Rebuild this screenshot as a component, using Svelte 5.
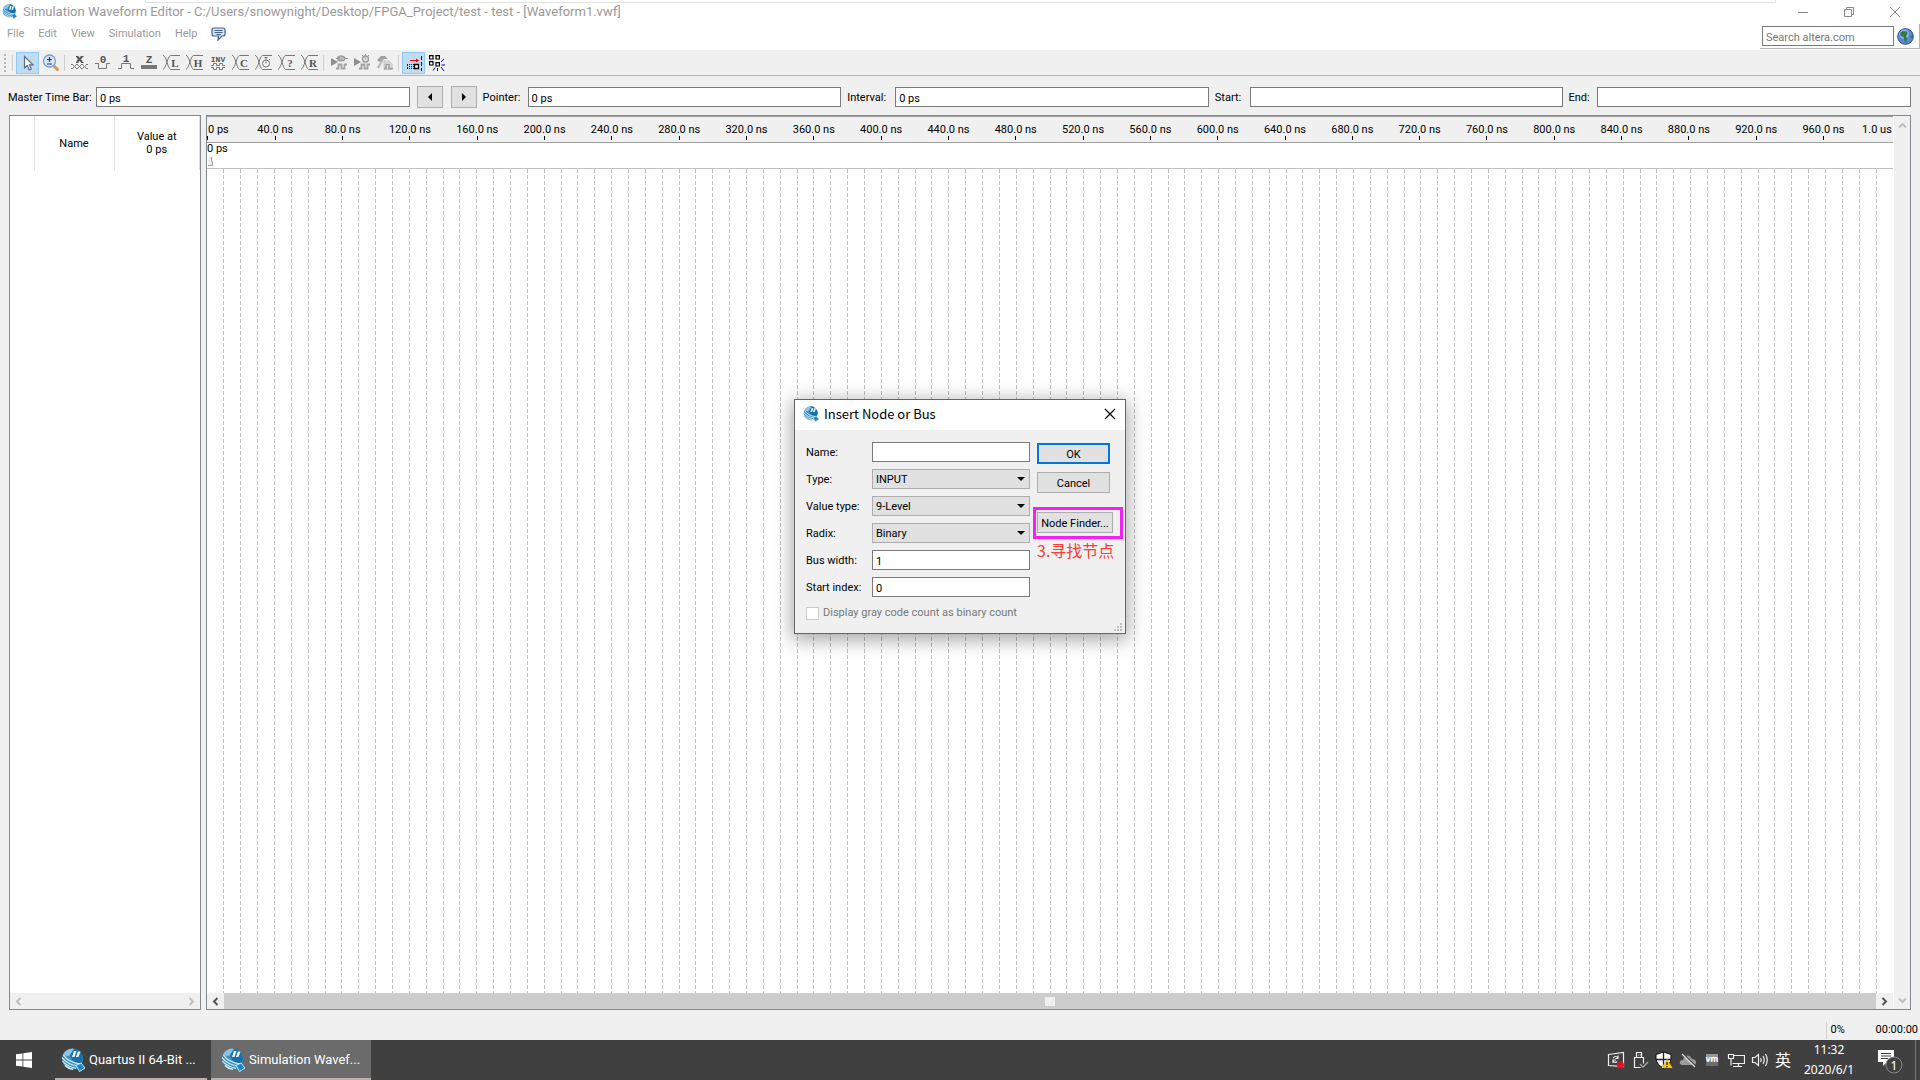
<script>
  const menus = ['File', 'Edit', 'View', 'Simulation', 'Help'];
  const marks = Array.from({ length: 24 }, (_, i) => `${(i + 1) * 40}.0 ns`);
  const gridLines = Array.from({ length: 99 }, (_, i) => i + 1);

  let name = $state('');
  let type = $state('INPUT');
  let valueType = $state('9-Level');
  let radix = $state('Binary');
  let busWidth = $state('1');
  let startIndex = $state('0');

  const waveTools = [
    { id: 'x', title: 'Forcing unknown' },
    { id: '0', title: 'Forcing low' },
    { id: '1', title: 'Forcing high' },
    { id: 'z', title: 'High impedance' },
    { id: 'L', title: 'Weak low' },
    { id: 'H', title: 'Weak high' },
    { id: 'inv', title: 'Invert' },
    { id: 'C', title: 'Count value' },
    { id: 'clock', title: 'Overwrite clock' },
    { id: '?', title: 'Arbitrary value' },
    { id: 'R', title: 'Random values' }
  ];
</script>

{#snippet logo(size)}
  <svg class="logo" width={size} height={size} viewBox="0 0 24 24" aria-hidden="true">
    <circle cx="11.500" cy="11" r="10.500" fill="#3f93c6" />
    <path d="M12 0.500A10.500 10.500 0 0 1 22 11L20 16L12 13L9 8Z" fill="#1871ad" />
    <path d="M2 7C4 2 9 0 13 1L8 8Z" fill="#8cc3e3" />
    <path d="M11 9L13 3H15.500L13.500 9ZM15 9L17 3.500H19.500L17.500 9Z" fill="#f4fafd" />
    <path d="M1 9.500C5 15 10 17 17 18M2.500 7C6 12.500 12 15 19 16M1.500 13C5 17.500 9 19 15 20.500M4 17.500C7 20.500 9 21 12 21.500" fill="none" stroke="#e2f1fa" stroke-width="1.200" />
    <path d="M15 17.500L20 15L24 20L18.500 23.500Z" fill="#1b86c6" stroke="#cfe8f6" stroke-width="1" />
  </svg>
{/snippet}

{#snippet chevron(dir)}
  <svg class="chev {dir}" width="9" height="9" viewBox="0 0 9 9" aria-hidden="true">
    <path d="M6.500 1L3 4.500L6.500 8" fill="none" stroke="currentColor" stroke-width="2" />
  </svg>
{/snippet}

<div class="screen">
  <header class="top">
    <div class="behind"></div>
    <div class="titlebar">
      {@render logo(15)}
      <h1>Simulation Waveform Editor - C:/Users/snowynight/Desktop/FPGA_Project/test - test - [Waveform1.vwf]</h1>
      <div class="controls">
        <button aria-label="Minimize"><svg width="12" height="12" viewBox="0 0 12 12"><path d="M1 6.500H11" /></svg></button>
        <button aria-label="Restore"><svg width="12" height="12" viewBox="0 0 12 12"><path d="M1.500 3.500H8.500V10.500H1.500ZM3.500 3.500V1.500H10.500V8.500H8.500" /></svg></button>
        <button aria-label="Close"><svg width="12" height="12" viewBox="0 0 12 12"><path d="M1 1L11 11M11 1L1 11" /></svg></button>
      </div>
    </div>
    <div class="menurow">
      <nav>
        {#each menus as m}<button>{m}</button>{/each}
        <button class="feedback" aria-label="Feedback">
          <svg width="15" height="14" viewBox="0 0 15 14">
            <path d="M3 1H12Q14 1 14 3V7Q14 9 12 9H11L7 13L7.500 9H3Q1 9 1 7V3Q1 1 3 1Z" fill="#d5e4f5" stroke="#47608a" stroke-width="1.200" />
            <path d="M3.500 3.500H11.500M3.500 5.500H11.500M5.500 7.500H10" stroke="#47608a" stroke-width="1" />
          </svg>
        </button>
      </nav>
      <form class="search">
        <input type="text" placeholder="Search altera.com" aria-label="Search altera.com" />
        <button type="button" aria-label="Search the web">
          <svg width="17" height="17" viewBox="0 0 17 17">
            <circle cx="8.500" cy="8.500" r="8" fill="#5b86d8" />
            <circle cx="7" cy="6" r="5" fill="#a9c8f4" opacity=".7" />
            <path d="M3 5L6 3L10 3.500L10.500 6L9 8L10 10L9 15L7.500 13L6.500 9L3.500 8Z" fill="#2f7d3d" />
            <path d="M13 8L16 7L16 10L14 9.500Z" fill="#2f7d3d" />
            <circle cx="8.500" cy="8.500" r="7.800" fill="none" stroke="#3354a4" stroke-width="1" />
          </svg>
        </button>
      </form>
    </div>
  </header>

  <div class="toolbar" role="toolbar" aria-label="Waveform tools">
    <span class="grip"></span>
    <span class="sep"></span>
    <button class="tool on" aria-label="Selection tool">
      <svg width="20" height="20" viewBox="0 0 20 20">
        <path d="M6.500 3.500V15L9.300 12.600L11.300 17L13.300 16L11.500 11.800H15Z" fill="#fff" stroke="#5a6b8c" stroke-width="1.200" />
      </svg>
    </button>
    <button class="tool" aria-label="Zoom tool">
      <svg width="20" height="20" viewBox="0 0 20 20">
        <path d="M13 13L16.500 16.500" stroke="#d59a54" stroke-width="3" stroke-linecap="round" />
        <circle cx="8.500" cy="8" r="6" fill="#d5e6fa" stroke="#7b9fce" stroke-width="1.300" />
        <path d="M6 6.500H11M8.500 4V9M6 11H11" stroke="#1d35ac" stroke-width="1.200" />
      </svg>
    </button>
    <span class="sep"></span>
    {#each waveTools as t}
      <button class="tool" aria-label={t.title}>
        <svg class="wave" width="20" height="20" viewBox="0 0 20 20">
          {#if t.id === 'x'}
            <path class="bold" d="M7 3.500L12 9M12 3.500L7 9" />
            <path class="bold thin" d="M6 3.500H8.500M11 3.500H13.500M6 9.500H8.500M11 9.500H13.500" />
            <path d="M1 12L2 11L7 16L12 11L17 16L18 15M1 15L2 16L7 11L12 16L17 11L18 12" />
          {:else if t.id === '0'}
            <text x="10" y="10" text-anchor="middle">0</text>
            <path d="M2 10.500H5.500V15.500H13.500V10.500H17" />
          {:else if t.id === '1'}
            <text x="10" y="9" text-anchor="middle">1</text>
            <path d="M2 15.500H5.500V10.500H14.500V15.500H18" />
          {:else if t.id === 'z'}
            <text x="10" y="10" text-anchor="middle">Z</text>
            <rect x="2" y="12" width="16" height="4" />
          {:else if t.id === 'inv'}
            <text class="small" x="10" y="9" text-anchor="middle">INV</text>
            <path d="M3 12.500H5.500V10.500H8.500V12.500H11.500V10.500H14.500V12.500H17M3 14.500H5.500V16.500H8.500V14.500H11.500V16.500H14.500V14.500H17" />
          {:else}
            <path d="M1 2C5 4 5 14 8.500 16.500H18M1 16.500C5 14 5 4 8.500 2.500H18" />
            {#if t.id === 'clock'}
              <circle cx="12" cy="10.500" r="3.500" />
              <path d="M12 7V4.500M10.500 4.500H13.500M12 10.500V8.500M15 6L16 7" />
            {:else}
              <text class="big" x="13" y="14" text-anchor="middle">{t.id}</text>
            {/if}
          {/if}
        </svg>
      </button>
    {/each}
    <span class="sep"></span>
    <button class="tool" aria-label="Run functional simulation" disabled>
      <svg width="20" height="20" viewBox="0 0 20 20">
        <path d="M2 5L9 9L2 13Z" fill="#8f8f8f" />
        <path d="M10 3H13Q16 3 16 5.500Q16 8 13 8H10ZM7 5.500H10M16 5.500H19M8 4H10M8 7H10" fill="#b9b9b9" stroke="#8f8f8f" />
        <path d="M7 15.500H9.500V11.500H12.500V15.500H15.500V11.500H18" fill="none" stroke="#a2a2a2" stroke-width="1.800" />
      </svg>
    </button>
    <button class="tool" aria-label="Run timing simulation" disabled>
      <svg width="20" height="20" viewBox="0 0 20 20">
        <path d="M2 5L9 9L2 13Z" fill="#8f8f8f" />
        <circle cx="13.500" cy="6" r="3" fill="#e2e2e2" stroke="#999" stroke-width="1.300" />
        <path d="M13.500 4.500V6.500M13.500 1V3M10 2L11 3M17 2L16 3" stroke="#999" />
        <path d="M7 15.500H9.500V11.500H12.500V15.500H15.500V11.500H18" fill="none" stroke="#a2a2a2" stroke-width="1.800" />
      </svg>
    </button>
    <button class="tool" aria-label="Generate testbench" disabled>
      <svg width="20" height="20" viewBox="0 0 20 20">
        <path d="M9 8H14L17 11V16.500H9Z" fill="#dedede" stroke="#c4c4c4" />
        <path d="M2 7L6 3L10 3L13 6L10 6L8 6L4 9Z" fill="#a0a0a0" />
        <path d="M8 6L3 15" stroke="#b4b4b4" stroke-width="2" />
        <path d="M9 15.500H11V11.500H14V15.500H18" fill="none" stroke="#a0a0a0" stroke-width="1.500" />
      </svg>
    </button>
    <span class="sep"></span>
    <button class="tool on" aria-label="Snap to grid">
      <svg width="20" height="20" viewBox="0 0 20 20">
        <path d="M6 7.500H13" stroke="#f00" /><path d="M12 5.500L15 7.500L12 9.500Z" fill="#f00" />
        <path d="M3 11.500H10M3 15.500H10" stroke="#222" stroke-dasharray="1 1" />
        <path d="M3.500 12V16M5 13.500H10" stroke="#222" stroke-dasharray="1 1" />
        <path d="M10.500 11.500H14.500V15.500H10.500Z" fill="#fff" stroke="#000" stroke-width="1.300" />
        <path d="M17.500 3V18" stroke="#00c" stroke-dasharray="4 2" />
      </svg>
    </button>
    <button class="tool" aria-label="Snap to transition">
      <svg width="20" height="20" viewBox="0 0 20 20">
        <path d="M2.600 2.600H6V6H2.600ZM9 2.600H12.400V6H9ZM2.600 8.600H6V12H2.600ZM9 9.600H12.400V13H9Z" fill="#fff" stroke="#000" stroke-width="1.200" />
        <path d="M14 9L17 6M14.500 12H18M14 14L17 18M10.500 15V18M8 14.500L6 17.500" stroke="#00c" />
      </svg>
    </button>
  </div>

  <section class="timebar">
    <label class="master" for="master">Master Time Bar:</label>
    <input id="master" type="text" value="0 ps" />
    <button class="step" aria-label="Previous transition"><svg width="6" height="8" viewBox="0 0 6 8"><path d="M5 0V8L1 4Z" /></svg></button>
    <button class="step" aria-label="Next transition"><svg width="6" height="8" viewBox="0 0 6 8"><path d="M1 0V8L5 4Z" /></svg></button>
    <label class="pointer" for="pointer">Pointer:</label>
    <input id="pointer" type="text" value="0 ps" />
    <label class="interval" for="interval">Interval:</label>
    <input id="interval" type="text" value="0 ps" />
    <label class="start" for="start">Start:</label>
    <input id="start" type="text" />
    <label class="end" for="end">End:</label>
    <input id="end" type="text" />
  </section>

  <main>
    <section class="signals" aria-label="Signals">
      <table>
        <thead>
          <tr><th class="c1" aria-label="Kind"></th><th class="c2">Name</th><th>Value at<br />0 ps</th></tr>
        </thead>
      </table>
      <div class="hscroll idle">{@render chevron('left')}<span></span>{@render chevron('right')}</div>
    </section>

    <section class="waves" aria-label="Waveform">
      <div class="canvas">
        <div class="ruler">
          <div class="half">0 ps</div>
          {#each marks as m}<div class="mark">{m}</div>{/each}
          <div class="half last">1.0 us</div>
        </div>
        <div class="cursor">
          0 ps
          <svg width="6" height="9" viewBox="0 0 6 9" aria-hidden="true"><path d="M0 0H3V4H4V8H0" fill="#eee" /><path d="M3.500 0V4.500H4.500V8.500H0" fill="none" stroke="#999" /></svg>
        </div>
        <svg class="grid" aria-hidden="true">
          {#each gridLines as i}<line x1="{i}%" x2="{i}%" y1="0" y2="100%" />{/each}
        </svg>
        <div class="hscroll">
          {@render chevron('left')}
          <span class="thumb"><i></i></span>
          {@render chevron('right')}
        </div>
      </div>
      <div class="vscroll">{@render chevron('up')}{@render chevron('down')}</div>
    </section>
  </main>

  <footer class="status"><span class="pct">0%</span><span>00:00:00</span></footer>

  <div class="taskbar">
    <button class="win" aria-label="Start">
      <svg width="16" height="16" viewBox="0 0 16 16"><path d="M0 2.300L6.500 1.400V7.600H0ZM7.300 1.300L16 0V7.600H7.300ZM0 8.400H6.500V14.600L0 13.700ZM7.300 8.400H16V16L7.300 14.700Z" fill="#fff" /></svg>
    </button>
    <button class="task first">{@render logo(24)}<span>Quartus II 64-Bit ...</span></button>
    <button class="task active">{@render logo(24)}<span>Simulation Wavef...</span></button>
    <div class="tray">
      <svg width="18" height="18" viewBox="0 0 18 18" aria-hidden="true">
        <path d="M1.500 3.500L16.500 1.500V15.500L1.500 14.500Z" fill="none" stroke="#eee" stroke-width="1.200" />
        <path d="M6 7Q9 4 11 7M11 4.500V7.500H8.500M6 12V9H9M6 10Q8 12.500 10 10.500" fill="none" stroke="#eee" stroke-width="1.200" />
        <circle cx="13.500" cy="14" r="3.500" fill="#e81123" />
      </svg>
      <svg width="18" height="18" viewBox="0 0 18 18" aria-hidden="true">
        <path d="M5.500 1.500H10.500V6.500H5.500ZM3.500 6.500H12.500V16.500H3.500ZM7 4H7.800M8.800 4H9.600" fill="none" stroke="#eee" stroke-width="1.200" />
        <path d="M9 13L12 16L17 11" fill="none" stroke="#404040" stroke-width="4" />
        <path d="M9 13L12 16L17 11" fill="none" stroke="#aaa" stroke-width="1.300" />
      </svg>
      <svg width="18" height="18" viewBox="0 0 18 18" aria-hidden="true">
        <path d="M8.500 1L16 3.500V8Q15 14 8.500 17Q2 14 1 8V3.500Z" fill="#fff" stroke="#111" />
        <path d="M8.500 1V17M1 8.500H16" stroke="#222" stroke-width="1.300" />
        <path d="M12 8L17.500 17H6.500Z" fill="#ffc20e" /><path d="M12 11V14M12 15V16.200" stroke="#222" stroke-width="1.300" />
      </svg>
      <svg width="18" height="18" viewBox="0 0 18 18" aria-hidden="true">
        <path d="M3 14Q0 13 1 10.500Q2 8.500 4 9Q5 4.500 9 4.500Q12 5 13 8Q17 8 17 11.500Q17 14 14 14Z" fill="#9c9c9c" />
        <path d="M3.500 2.500L16.500 15.500" stroke="#404040" stroke-width="2" /><path d="M3 3L16 16" stroke="#e0e0e0" stroke-width="1.200" />
      </svg>
      <svg width="18" height="18" viewBox="0 0 18 18" aria-hidden="true">
        <rect x="3" y="3" width="12" height="12" fill="#959595" /><rect x="3" y="10" width="12" height="5" fill="#6d6d6d" />
        <text x="9" y="11" text-anchor="middle" fill="#fff" font-size="8" font-weight="700">vm</text>
      </svg>
      <svg width="18" height="18" viewBox="0 0 18 18" aria-hidden="true">
        <path d="M6.500 4.500H17.500V12.500H5.500M1.500 3.500H6.500V7.500H1.500ZM4 7.500V14.500M11.500 12.500V15.500M6 15.500H15" fill="none" stroke="#eee" stroke-width="1.200" />
      </svg>
      <svg width="18" height="18" viewBox="0 0 18 18" aria-hidden="true">
        <path d="M1.500 6.500H4L7.500 3.500V14.500L4 11.500H1.500ZM9.500 7Q11 9 9.500 11M12 5Q14.500 9 12 13M14.500 3Q18 9 14.500 15" fill="none" stroke="#eee" stroke-width="1.200" />
      </svg>
      <span class="ime">英</span>
    </div>
    <time>11:32<br />2020/6/1</time>
    <button class="notice" aria-label="Notifications">
      <svg width="28" height="28" viewBox="0 0 28 28">
        <path d="M2 4H18V16H11L7 20V16H2Z" fill="#fff" />
        <path d="M5 7.500H15M5 10H15M5 12.500H12" stroke="#404040" />
        <circle cx="18" cy="19" r="8" fill="#404040" stroke="#888" />
        <text x="18" y="24" text-anchor="middle" fill="#fff" font-size="13">1</text>
      </svg>
    </button>
  </div>

  <div class="dialog" role="dialog" aria-label="Insert Node or Bus">
    <div class="dhead">
      {@render logo(16)}
      <h2>Insert Node or Bus</h2>
      <button aria-label="Close dialog"><svg width="12" height="12" viewBox="0 0 12 12"><path d="M1 1L11 11M11 1L1 11" /></svg></button>
    </div>
    <div class="dbody">
      <div class="fields">
        <label for="f-name">Name:</label><input id="f-name" type="text" bind:value={name} />
        <label for="f-type">Type:</label>
        <span class="pick"><select id="f-type" bind:value={type}><option>INPUT</option></select></span>
        <label for="f-vt">Value type:</label>
        <span class="pick"><select id="f-vt" bind:value={valueType}><option>9-Level</option></select></span>
        <label for="f-radix">Radix:</label>
        <span class="pick"><select id="f-radix" bind:value={radix}><option>Binary</option></select></span>
        <label for="f-bw">Bus width:</label><input id="f-bw" type="text" bind:value={busWidth} />
        <label for="f-si">Start index:</label><input id="f-si" type="text" bind:value={startIndex} />
        <label class="check"><input type="checkbox" disabled />Display gray code count as binary count</label>
      </div>
      <div class="actions">
        <button class="ok">OK</button>
        <button>Cancel</button>
        <div class="callout"><button>Node Finder...</button></div>
        <span class="note">3.寻找节点</span>
      </div>
    </div>
    <svg class="corner" width="8" height="8" viewBox="0 0 8 8" aria-hidden="true">
      <path d="M6 0H8V2H6ZM3 3H5V5H3ZM6 3H8V5H6ZM0 6H2V8H0ZM3 6H5V8H3ZM6 6H8V8H6Z" fill="#bfbfbf" />
    </svg>
  </div>
</div>

<style>
  :global(body) { margin: 0; }
  .screen {
    position: relative;
    display: flex;
    flex-direction: column;
    height: 100vh;
    overflow: hidden;
    background: #f0f0f0;
    color: #000;
    font: 11px/14px Roboto, "Noto Sans CJK SC", sans-serif;
  }
  .screen * { box-sizing: border-box; }
  button, input, select { font: inherit; color: inherit; margin: 0; padding: 0; border-radius: 0; }
  button { background: none; border: 0; display: flex; align-items: center; justify-content: center; }
  svg { display: block; flex: none; }
  h1, h2 { margin: 0; font-weight: 400; }

  .top { display: flex; flex-direction: column; height: 51px; background: #fff; border-bottom: 1px solid #f0f0f0; color: #999; }
  .behind { height: 3px; margin: 0 144px 0 145px; border: 1px solid #e2e2e2; border-top: 0; flex: none; }
  .titlebar { display: flex; align-items: center; height: 17px; padding: 0 14px 0 2px; gap: 6px; }
  h1 { flex: 1; font: 13px/17px Roboto, sans-serif; white-space: nowrap; }
  .controls { display: flex; gap: 34px; padding-right: 5px; }
  .controls path { fill: none; stroke: #888; }
  .menurow { display: flex; justify-content: space-between; height: 30px; }
  nav { display: flex; align-items: center; gap: 14px; padding: 0 0 2px 7px; }
  .search { display: flex; align-items: center; gap: 3px; width: 160px; margin-top: 4px; height: 25px; padding: 0 5px 0 2px; border-right: 1px solid #b4b4b4; border-bottom: 1px solid #b4b4b4; }
  .search input { flex: 1; min-width: 0; }
  input[type='text'] { height: 20px; padding: 2px 3px 0; border: 1px solid #7a7a7a; background: #fff; outline: 0; }
  ::placeholder { color: #777; opacity: 1; }

  .toolbar { display: flex; align-items: center; height: 25px; padding: 0 4px; border-bottom: 1px solid #b4b4b4; flex: none; }
  .grip { width: 2px; height: 18px; margin-right: 6px; background: repeating-linear-gradient(#b4b4b4 0 2px, transparent 2px 4px); }
  .sep { width: 1px; height: 16px; margin: 0 3px 0 2px; background: #cfcfcf; }
  .grip + .sep { margin: 0 3px 0 0; }
  .tool { width: 23px; height: 22px; }
  .tool.on { background: #c0dcf3; border: 1px solid #90c8f6; }
  .wave path, .wave circle { fill: none; stroke: #777; }
  .wave .bold { stroke: #555; stroke-width: 2; }
  .wave .thin { stroke-width: 1; }
  .wave rect { fill: #777; }
  .wave text { fill: #555; font: 700 11px "Liberation Mono", monospace; }
  .wave .small { font-size: 8px; }
  .wave .big { font: 700 11px "Liberation Serif", serif; }

  .timebar { display: flex; align-items: center; padding: 10px 9px 7px 8px; height: 39px; flex: none; }
  .timebar input { flex: 1; min-width: 0; }
  .master { width: 88px; }
  .pointer { width: 51px; padding-left: 6px; }
  .interval { width: 54px; padding-left: 6px; }
  .start { width: 41px; padding-left: 6px; }
  .end { width: 34px; padding-left: 5px; }
  label { padding-top: 2px; white-space: nowrap; }
  .step { width: 26px; height: 22px; margin-left: 7px; border: 1px solid #adadad; background: #e1e1e1; }
  .step + .step { margin-left: 8px; }

  main { display: flex; flex: 1; min-height: 0; gap: 5px; padding: 0 9px; }
  .signals { display: flex; flex-direction: column; justify-content: space-between; width: 192px; border: 1px solid #828790; background: #fff; }
  table { width: 100%; border-collapse: collapse; table-layout: fixed; }
  th { height: 54px; padding: 0; font-weight: 400; line-height: 13px; border-right: 1px solid #e0e0e0; }
  .c1 { width: 24px; }
  .c2 { width: 80px; }
  .waves { display: flex; flex: 1; min-width: 0; border: 1px solid #828790; background: #fff; }
  .canvas { display: flex; flex-direction: column; flex: 1; min-width: 0; }
  .ruler { display: flex; height: 27px; background: #f0f0f0; border-top: 1px solid #a0a0a0; border-bottom: 1px solid #a0a0a0; flex: none; }
  .mark, .half { flex: 2 1 0; min-width: 0; padding-top: 6px; text-align: center; white-space: nowrap; background: linear-gradient(#000, #000) 50% 19px / 1px 4px no-repeat; }
  .half { flex-grow: 1; text-align: left; padding-left: 1px; background-position: 0 19px; }
  .half.last { display: flex; justify-content: flex-end; background: none; padding-right: 1px; }
  .cursor { height: 26px; border-bottom: 1px solid #c0c0c0; line-height: 12px; flex: none; }
  .cursor svg { margin-left: 1px; margin-top: 2px; }
  .grid { flex: 1; width: 100%; min-height: 0; overflow: hidden; }
  .grid line { stroke: #c0c0c0; stroke-dasharray: 4 2; shape-rendering: crispEdges; }
  .hscroll { display: flex; align-items: center; justify-content: space-between; height: 16px; padding: 0 4px; gap: 4px; background: #f0f0f0; color: #555; flex: none; }
  .hscroll.idle, .vscroll { color: #bfbfbf; }
  .thumb { flex: 1; align-self: stretch; display: flex; align-items: center; justify-content: center; background: #cdcdcd; }
  .thumb i { width: 10px; height: 9px; background: #f0f0f0; }
  .vscroll { display: flex; flex-direction: column; justify-content: space-between; align-items: center; width: 17px; padding: 5px 0 4px; background: #f0f0f0; border-left: 1px solid #fff; }
  .right { transform: rotate(180deg); }
  .up { transform: rotate(90deg); }
  .down { transform: rotate(-90deg); }

  .status { display: flex; align-items: center; justify-content: flex-end; height: 30px; padding: 11px 2px 1px 0; flex: none; }
  .pct { width: 50px; height: 17px; padding: 1px 0 0 4px; border-left: 1px solid #d0d0d0; }

  .taskbar { display: flex; height: 40px; background: #404040; color: #fff; font: 12px/20px "Noto Sans", "Noto Sans CJK SC", sans-serif; flex: none; }
  .win { width: 48px; }
  .task { justify-content: flex-start; gap: 4px; width: 160px; padding: 2px 6px 0 10px; border-bottom: 2px solid #b9b2ac; font: 13px/20px Roboto, sans-serif; white-space: nowrap; }
  .task.first { width: 152px; margin: 0 4px 0 7px; padding-left: 6px; }
  .task.active { background: #6b6b6b; }
  .tray { display: flex; align-items: center; gap: 6px; margin-left: auto; }
  .ime { font-size: 16px; }
  time { width: 76px; text-align: center; }
  .notice { width: 49px; margin-right: 4px; padding-right: 3px; border-right: 1px solid #777; }

  .dialog { position: absolute; top: 399px; left: 50%; width: 332px; margin-left: -166px; border: 1px solid #666; background: #f0f0f0; box-shadow: 0 4px 18px 2px rgb(0 0 0 / 35%); }
  .dhead { display: flex; align-items: center; gap: 5px; height: 30px; padding: 0 9px 2px 8px; background: #fff; }
  h2 { flex: 1; font: 13px/18px "Noto Sans CJK SC", sans-serif; }
  .dhead button path { fill: none; stroke: #000; stroke-width: 1.2; }
  .dbody { display: flex; align-items: flex-start; gap: 7px; padding: 12px 2px 12px 11px; }
  .fields { display: grid; grid-template-columns: 66px 158px; row-gap: 7px; align-items: center; }
  .pick { display: flex; position: relative; }
  .pick::after { content: ''; position: absolute; right: 5px; top: 8px; border: 4px solid transparent; border-top-color: #000; border-bottom: 0; pointer-events: none; }
  select { appearance: none; width: 100%; height: 20px; padding: 2px 3px 0; border: 1px solid #adadad; background: #e1e1e1; }
  .check { grid-column: 1 / -1; display: flex; align-items: center; gap: 4px; height: 17px; padding-top: 1px; color: #777; }
  .check input { appearance: none; width: 13px; height: 13px; border: 1px solid #ccc; background: #fff; }
  .actions { display: flex; flex-direction: column; padding-top: 1px; }
  .actions button { width: 73px; height: 21px; margin-bottom: 8px; padding-top: 2px; border: 1px solid #adadad; background: #e1e1e1; white-space: nowrap; }
  .actions .ok { border: 2px solid #0078d7; }
  .callout { width: 90px; height: 32px; margin: 6px 0 0 -4px; padding: 2px 1px; border: 3px solid #f31ff3; }
  .callout button { width: 76px; }
  .note { margin-top: 1px; font: 16px/20px "Noto Sans CJK SC", sans-serif; color: #fb3b35; white-space: nowrap; }
  .corner { position: absolute; right: 3px; bottom: 2px; }
</style>
